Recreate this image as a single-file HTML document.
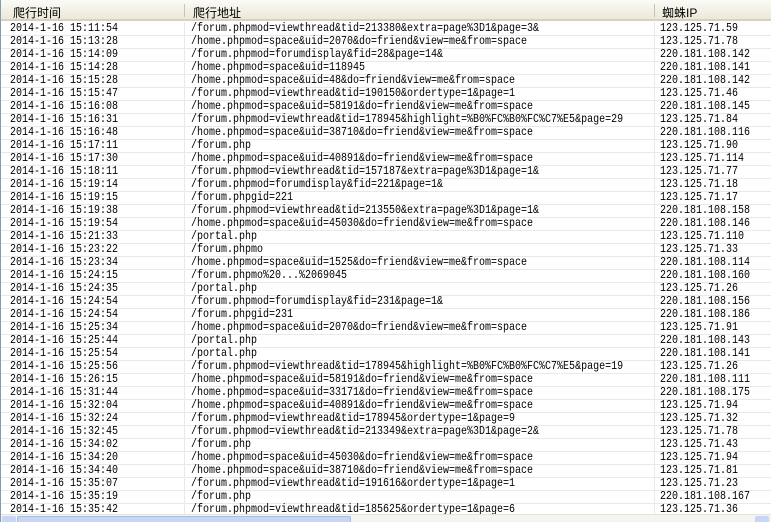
<!DOCTYPE html>
<html><head><meta charset="utf-8">
<style>
html,body{margin:0;padding:0;width:771px;height:522px;overflow:hidden;background:#fff;}
.wrap{position:absolute;left:0;top:0;width:771px;height:522px;border-left:1px solid #7f9db9;box-sizing:border-box;overflow:hidden;}
.hdr{position:absolute;left:0;top:0;width:771px;height:21px;background:linear-gradient(#fbfbf8,#ece9d8);border-bottom:2px solid #d6d2c2;box-sizing:border-box;font:12px "Liberation Sans","Noto Sans CJK SC",sans-serif;color:#000;z-index:2;}
.hdr span{position:absolute;top:4px;}
.sep{position:absolute;top:4px;width:1px;height:13px;background:#c7c5b2;}
.rows{position:absolute;left:0;top:23px;width:771px;}
.r{position:relative;width:771px;height:13px;border-bottom:1px solid #ece9e4;box-sizing:border-box;font:10px/12px "Liberation Mono",monospace;color:#000;white-space:nowrap;}
.r span{position:absolute;top:0px;transform:scaleY(1.15);transform-origin:0 0;}
.a{left:9px}.b{left:190px}.c{left:659px}
.vl{position:absolute;top:22px;width:1px;height:500px;background:#ece9e4;z-index:1;}
.sb{position:absolute;left:0;top:514px;width:771px;height:8px;background:#f4f4f0;border-top:1px solid #e4e4dc;z-index:3;}
.th{position:absolute;left:16px;top:1px;width:334px;height:8px;background:#c8d6f6;border:1px solid #a8bce8;box-sizing:border-box;border-radius:2px;}
.btn{position:absolute;top:1px;width:14px;height:8px;background:#c8d6f6;border-radius:2px;}
</style></head><body>
<div class="wrap">
<div class="hdr"><span style="left:12px">爬行时间</span><div class="sep" style="left:183px"></div><span style="left:192px">爬行地址</span><div class="sep" style="left:653px"></div><span style="left:661px">蜘蛛IP</span></div>
<div class="vl" style="left:183px"></div><div class="vl" style="left:653px"></div>
<div class="rows">
<div class="r"><span class="a">2014-1-16 15:11:54</span><span class="b">/forum.phpmod=viewthread&amp;tid=213380&amp;extra=page%3D1&amp;page=3&amp;</span><span class="c">123.125.71.59</span></div>
<div class="r"><span class="a">2014-1-16 15:13:28</span><span class="b">/home.phpmod=space&amp;uid=2070&amp;do=friend&amp;view=me&amp;from=space</span><span class="c">123.125.71.78</span></div>
<div class="r"><span class="a">2014-1-16 15:14:09</span><span class="b">/forum.phpmod=forumdisplay&amp;fid=28&amp;page=14&amp;</span><span class="c">220.181.108.142</span></div>
<div class="r"><span class="a">2014-1-16 15:14:28</span><span class="b">/home.phpmod=space&amp;uid=118945</span><span class="c">220.181.108.141</span></div>
<div class="r"><span class="a">2014-1-16 15:15:28</span><span class="b">/home.phpmod=space&amp;uid=48&amp;do=friend&amp;view=me&amp;from=space</span><span class="c">220.181.108.142</span></div>
<div class="r"><span class="a">2014-1-16 15:15:47</span><span class="b">/forum.phpmod=viewthread&amp;tid=190150&amp;ordertype=1&amp;page=1</span><span class="c">123.125.71.46</span></div>
<div class="r"><span class="a">2014-1-16 15:16:08</span><span class="b">/home.phpmod=space&amp;uid=58191&amp;do=friend&amp;view=me&amp;from=space</span><span class="c">220.181.108.145</span></div>
<div class="r"><span class="a">2014-1-16 15:16:31</span><span class="b">/forum.phpmod=viewthread&amp;tid=178945&amp;highlight=%B0%FC%B0%FC%C7%E5&amp;page=29</span><span class="c">123.125.71.84</span></div>
<div class="r"><span class="a">2014-1-16 15:16:48</span><span class="b">/home.phpmod=space&amp;uid=38710&amp;do=friend&amp;view=me&amp;from=space</span><span class="c">220.181.108.116</span></div>
<div class="r"><span class="a">2014-1-16 15:17:11</span><span class="b">/forum.php</span><span class="c">123.125.71.90</span></div>
<div class="r"><span class="a">2014-1-16 15:17:30</span><span class="b">/home.phpmod=space&amp;uid=40891&amp;do=friend&amp;view=me&amp;from=space</span><span class="c">123.125.71.114</span></div>
<div class="r"><span class="a">2014-1-16 15:18:11</span><span class="b">/forum.phpmod=viewthread&amp;tid=157187&amp;extra=page%3D1&amp;page=1&amp;</span><span class="c">123.125.71.77</span></div>
<div class="r"><span class="a">2014-1-16 15:19:14</span><span class="b">/forum.phpmod=forumdisplay&amp;fid=221&amp;page=1&amp;</span><span class="c">123.125.71.18</span></div>
<div class="r"><span class="a">2014-1-16 15:19:15</span><span class="b">/forum.phpgid=221</span><span class="c">123.125.71.17</span></div>
<div class="r"><span class="a">2014-1-16 15:19:38</span><span class="b">/forum.phpmod=viewthread&amp;tid=213550&amp;extra=page%3D1&amp;page=1&amp;</span><span class="c">220.181.108.158</span></div>
<div class="r"><span class="a">2014-1-16 15:19:54</span><span class="b">/home.phpmod=space&amp;uid=45030&amp;do=friend&amp;view=me&amp;from=space</span><span class="c">220.181.108.146</span></div>
<div class="r"><span class="a">2014-1-16 15:21:33</span><span class="b">/portal.php</span><span class="c">123.125.71.110</span></div>
<div class="r"><span class="a">2014-1-16 15:23:22</span><span class="b">/forum.phpmo</span><span class="c">123.125.71.33</span></div>
<div class="r"><span class="a">2014-1-16 15:23:34</span><span class="b">/home.phpmod=space&amp;uid=1525&amp;do=friend&amp;view=me&amp;from=space</span><span class="c">220.181.108.114</span></div>
<div class="r"><span class="a">2014-1-16 15:24:15</span><span class="b">/forum.phpmo%20...%2069045</span><span class="c">220.181.108.160</span></div>
<div class="r"><span class="a">2014-1-16 15:24:35</span><span class="b">/portal.php</span><span class="c">123.125.71.26</span></div>
<div class="r"><span class="a">2014-1-16 15:24:54</span><span class="b">/forum.phpmod=forumdisplay&amp;fid=231&amp;page=1&amp;</span><span class="c">220.181.108.156</span></div>
<div class="r"><span class="a">2014-1-16 15:24:54</span><span class="b">/forum.phpgid=231</span><span class="c">220.181.108.186</span></div>
<div class="r"><span class="a">2014-1-16 15:25:34</span><span class="b">/home.phpmod=space&amp;uid=2070&amp;do=friend&amp;view=me&amp;from=space</span><span class="c">123.125.71.91</span></div>
<div class="r"><span class="a">2014-1-16 15:25:44</span><span class="b">/portal.php</span><span class="c">220.181.108.143</span></div>
<div class="r"><span class="a">2014-1-16 15:25:54</span><span class="b">/portal.php</span><span class="c">220.181.108.141</span></div>
<div class="r"><span class="a">2014-1-16 15:25:56</span><span class="b">/forum.phpmod=viewthread&amp;tid=178945&amp;highlight=%B0%FC%B0%FC%C7%E5&amp;page=19</span><span class="c">123.125.71.26</span></div>
<div class="r"><span class="a">2014-1-16 15:26:15</span><span class="b">/home.phpmod=space&amp;uid=58191&amp;do=friend&amp;view=me&amp;from=space</span><span class="c">220.181.108.111</span></div>
<div class="r"><span class="a">2014-1-16 15:31:44</span><span class="b">/home.phpmod=space&amp;uid=33171&amp;do=friend&amp;view=me&amp;from=space</span><span class="c">220.181.108.175</span></div>
<div class="r"><span class="a">2014-1-16 15:32:04</span><span class="b">/home.phpmod=space&amp;uid=40891&amp;do=friend&amp;view=me&amp;from=space</span><span class="c">123.125.71.94</span></div>
<div class="r"><span class="a">2014-1-16 15:32:24</span><span class="b">/forum.phpmod=viewthread&amp;tid=178945&amp;ordertype=1&amp;page=9</span><span class="c">123.125.71.32</span></div>
<div class="r"><span class="a">2014-1-16 15:32:45</span><span class="b">/forum.phpmod=viewthread&amp;tid=213349&amp;extra=page%3D1&amp;page=2&amp;</span><span class="c">123.125.71.78</span></div>
<div class="r"><span class="a">2014-1-16 15:34:02</span><span class="b">/forum.php</span><span class="c">123.125.71.43</span></div>
<div class="r"><span class="a">2014-1-16 15:34:20</span><span class="b">/home.phpmod=space&amp;uid=45030&amp;do=friend&amp;view=me&amp;from=space</span><span class="c">123.125.71.94</span></div>
<div class="r"><span class="a">2014-1-16 15:34:40</span><span class="b">/home.phpmod=space&amp;uid=38710&amp;do=friend&amp;view=me&amp;from=space</span><span class="c">123.125.71.81</span></div>
<div class="r"><span class="a">2014-1-16 15:35:07</span><span class="b">/forum.phpmod=viewthread&amp;tid=191616&amp;ordertype=1&amp;page=1</span><span class="c">123.125.71.23</span></div>
<div class="r"><span class="a">2014-1-16 15:35:19</span><span class="b">/forum.php</span><span class="c">220.181.108.167</span></div>
<div class="r"><span class="a">2014-1-16 15:35:42</span><span class="b">/forum.phpmod=viewthread&amp;tid=185625&amp;ordertype=1&amp;page=6</span><span class="c">123.125.71.36</span></div>
</div>
<div class="sb"><div class="btn" style="left:1px"></div><div class="th"></div><div class="btn" style="left:754px"></div></div>
</div>
</body></html>
